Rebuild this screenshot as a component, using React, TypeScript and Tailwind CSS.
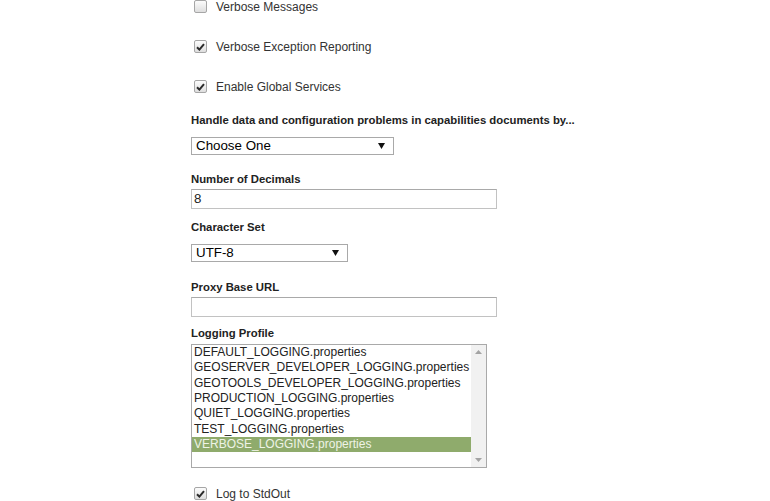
import React from 'react'

const profiles = [
  'DEFAULT_LOGGING.properties',
  'GEOSERVER_DEVELOPER_LOGGING.properties',
  'GEOTOOLS_DEVELOPER_LOGGING.properties',
  'PRODUCTION_LOGGING.properties',
  'QUIET_LOGGING.properties',
  'TEST_LOGGING.properties',
  'VERBOSE_LOGGING.properties',
]

function Check({ checked, label, className = '' }: { checked?: boolean; label: string; className?: string }) {
  return (
    <div className={`flex h-[13px] items-center ${className}`}>
      <span className="ml-[3px] flex h-[13px] w-[13px] items-center justify-center rounded-[2px] border border-[#a6a6a6] bg-gradient-to-b from-[#fcfcfc] to-[#dedede]">
        {checked && (
          <svg width="9" height="8" viewBox="0 0 9 8">
            <path d="M1 4.2 L3.4 6.6 L8 1.2" fill="none" stroke="#2b2b2b" strokeWidth="2" />
          </svg>
        )}
      </span>
      <span className="ml-[9px] mt-[2px] text-[12px] leading-[13px] text-[#333]">{label}</span>
    </div>
  )
}

function Label({ children, className = '' }: { children: React.ReactNode; className?: string }) {
  return <div className={`text-[11.33px] font-bold leading-[14px] text-[#222] ${className}`}>{children}</div>
}

function Select({ value, width, className = '' }: { value: string; width: string; className?: string }) {
  return (
    <div className={`flex h-[18px] items-center justify-between border border-[#a9a9a9] bg-white pl-[4px] pr-[8px] ${width} ${className}`}>
      <span className="text-[13.33px] leading-[16px] text-black">{value}</span>
      <svg width="7" height="6" viewBox="0 0 7 6">
        <path d="M0 0 H7 L3.5 6 Z" fill="#111" />
      </svg>
    </div>
  )
}

function TextInput({ value = '', className = '' }: { value?: string; className?: string }) {
  return (
    <div className={`flex h-[20px] w-[306px] items-center border border-[#c2c2c2] border-t-[#a9a9a9] bg-white pl-[2px] ${className}`}>
      <span className="text-[13.33px] leading-[16px] text-[#222]">{value}</span>
    </div>
  )
}

export default function App() {
  return (
    <div className="h-[501px] w-[770px] overflow-hidden bg-white pl-[191px] font-['Liberation_Sans',Arial,sans-serif]">
      <Check label="Verbose Messages" />
      <Check checked label="Verbose Exception Reporting" className="mt-[27px]" />
      <Check checked label="Enable Global Services" className="mt-[27px]" />

      <Label className="mt-[20px]">Handle data and configuration problems in capabilities documents by...</Label>
      <Select value="Choose One" width="w-[203px]" className="mt-[10px]" />

      <Label className="mt-[17px]">Number of Decimals</Label>
      <TextInput value="8" className="mt-[3px]" />

      <Label className="mt-[11px]">Character Set</Label>
      <Select value="UTF-8" width="w-[157px]" className="mt-[10px]" />

      <Label className="mt-[18px]">Proxy Base URL</Label>
      <TextInput className="mt-[3px]" />

      <Label className="mt-[9px]">Logging Profile</Label>
      <div className="mt-[4px] flex h-[124px] w-[296px] border border-[#a9a9a9] bg-white">
        <ul className="flex-1">
          {profiles.map((p, i) => (
            <li
              key={p}
              className={`h-[15.33px] whitespace-nowrap pl-[2px] text-[12px] leading-[15.33px] ${
                i === profiles.length - 1 ? 'bg-[#8fab6c] text-[#eef3e6]' : 'text-[#222]'
              }`}
            >
              {p}
            </li>
          ))}
        </ul>
        <div className="flex w-[15px] flex-col items-center justify-between bg-[#f1f1f1] py-[5px]">
          <svg width="7" height="4" viewBox="0 0 7 4">
            <path d="M0 4 H7 L3.5 0 Z" fill="#a3a3a3" />
          </svg>
          <svg width="7" height="4" viewBox="0 0 7 4">
            <path d="M0 0 H7 L3.5 4 Z" fill="#a3a3a3" />
          </svg>
        </div>
      </div>

      <Check checked label="Log to StdOut" className="mt-[19px]" />
    </div>
  )
}
